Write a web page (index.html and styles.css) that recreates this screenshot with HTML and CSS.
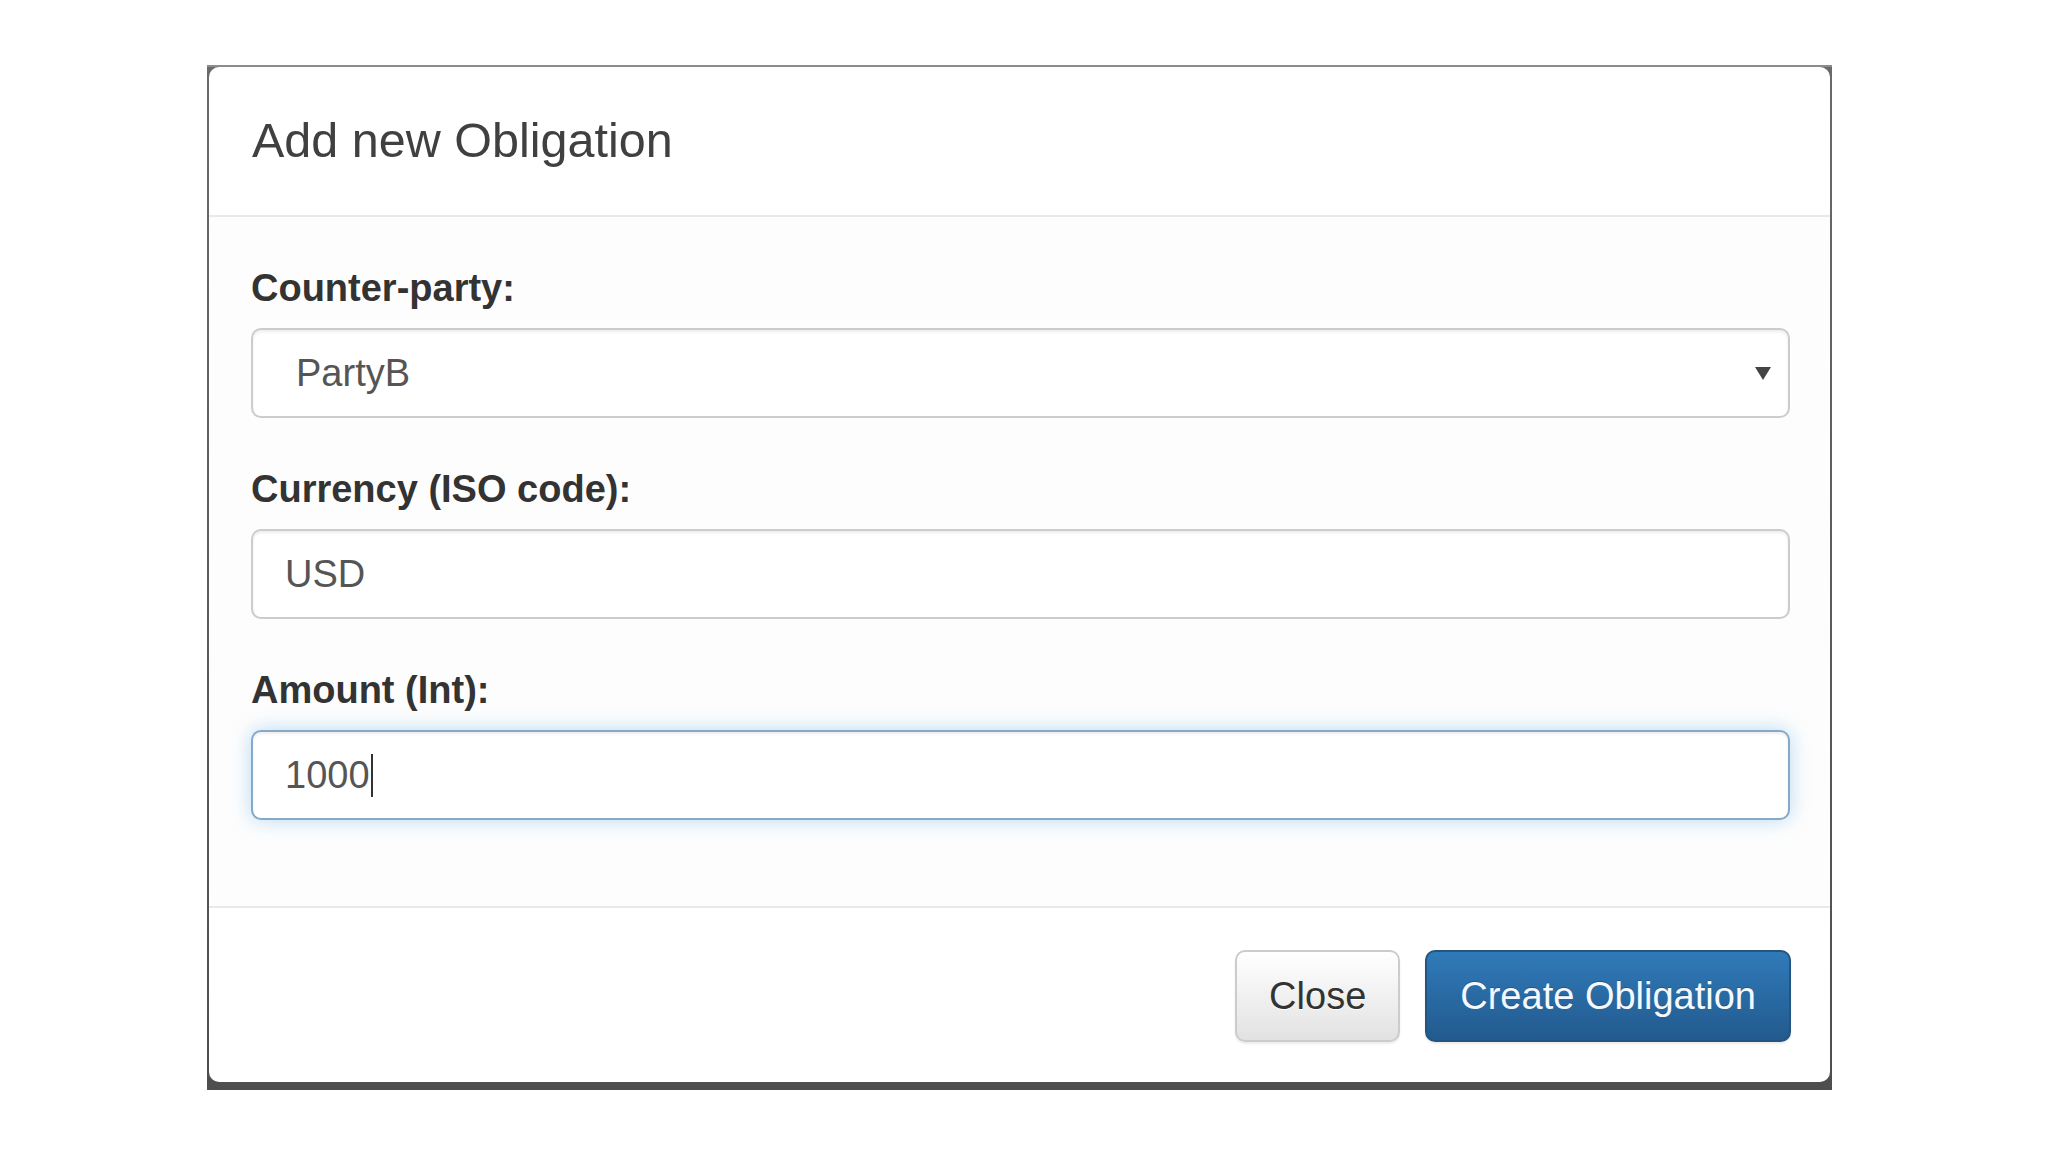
FILE: index.html
```html
<!DOCTYPE html>
<html lang="en">
<head>
<meta charset="utf-8">
<title>Add new Obligation</title>
<link rel="stylesheet" href="styles.css">
</head>
<body>
<div class="page">
  <div class="frame">
    <div class="dialog">
      <div class="dialog-header">
        <h4 class="dialog-title">Add new Obligation</h4>
      </div>
      <div class="dialog-body">
        <div class="form-group">
          <label class="form-label">Counter-party:</label>
          <div class="form-control form-select">
            <span class="value">PartyB</span>
            <svg class="select-arrow" width="16" height="13" viewBox="0 0 16 13"><polygon points="0,0 16,0 8,13" fill="#444"/></svg>
          </div>
        </div>
        <div class="form-group">
          <label class="form-label">Currency (ISO code):</label>
          <div class="form-control"><span class="value">USD</span></div>
        </div>
        <div class="form-group">
          <label class="form-label">Amount (Int):</label>
          <div class="form-control is-focus"><span class="value">1000</span><span class="text-caret"></span></div>
        </div>
      </div>
      <div class="dialog-footer">
        <button class="btn btn-default" type="button">Close</button>
        <button class="btn btn-primary" type="button">Create Obligation</button>
      </div>
    </div>
  </div>
</div>
</body>
</html>
```

FILE: styles.css
```css
html, body {
  margin: 0;
  padding: 0;
  background: #ffffff;
}

body {
  font-family: "Liberation Sans", Arial, sans-serif;
  color: #333333;
}

.page {
  padding: 65px 0 0 207px;
}

.frame {
  width: 1625px;
  box-sizing: border-box;
  padding: 2px 2px 8px 2px;
  background:
    linear-gradient(#8c8c8c, #8c8c8c) top left / 100% 2px no-repeat,
    linear-gradient(#6a6a6a, #4e4e4e);
}

.dialog {
  background: #ffffff;
  border-radius: 10px;
}

.dialog-header {
  padding: 39px 42px 41px 43px;
  border-bottom: 2px solid #e9e9e9;
}

.dialog-title {
  margin: 0;
  font-size: 48.5px;
  line-height: 68px;
  font-weight: normal;
  color: #404040;
}

.dialog-body {
  padding: 44px 40px 42px 42px;
  background: #fdfdfd;
}

.form-group {
  margin-bottom: 44px;
}

.form-label {
  display: block;
  font-size: 38px;
  line-height: 54px;
  font-weight: bold;
  color: #333333;
  margin-bottom: 13px;
}

.form-control {
  height: 90px;
  box-sizing: border-box;
  border: 2px solid #cccccc;
  border-radius: 10px;
  padding: 0 32px;
  display: flex;
  align-items: center;
  font-size: 38px;
  color: #555555;
  background: #ffffff;
  box-shadow: inset 0 2px 3px rgba(0, 0, 0, 0.075);
}

.form-select {
  padding: 0 17px 0 43px;
}

.select-arrow {
  margin-left: auto;
}

.form-control.is-focus {
  border-color: #86a9c8;
  box-shadow: inset 0 2px 3px rgba(0, 0, 0, 0.075), 0 0 20px rgba(102, 175, 233, 0.45);
}

.text-caret {
  display: inline-block;
  width: 2px;
  height: 43px;
  background: #333333;
  margin-left: 1px;
}

.dialog-footer {
  border-top: 2px solid #e9e9e9;
  padding: 42px 39px 40px 42px;
  display: flex;
  justify-content: flex-end;
  gap: 25px;
}

.btn {
  height: 92px;
  box-sizing: border-box;
  padding: 0 32px;
  font-family: "Liberation Sans", Arial, sans-serif;
  font-size: 38px;
  line-height: 54px;
  border: 2px solid transparent;
  border-radius: 10px;
  cursor: pointer;
}

.btn-default {
  color: #333333;
  border-color: #cccccc;
  background: linear-gradient(#ffffff, #e2e2e2);
  text-shadow: 0 1px 0 #ffffff;
  box-shadow: 0 2px 2px rgba(0, 0, 0, 0.08);
}

.btn-primary {
  padding: 0 33px;
  color: #f4f9ff;
  border-color: #245580;
  background: linear-gradient(#307ab9, #225a8e);
  text-shadow: 0 -1px 0 rgba(0, 0, 0, 0.2);
  box-shadow: 0 2px 2px rgba(0, 0, 0, 0.08);
}
```
